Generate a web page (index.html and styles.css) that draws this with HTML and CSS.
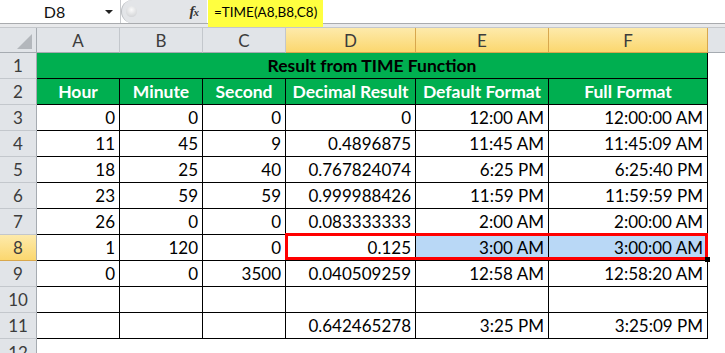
FILE: index.html
```html
<!DOCTYPE html>
<html>
<head>
<meta charset="utf-8">
<link rel="stylesheet" href="styles.css">
</head>
<body>
<div class="app">
  <div class="fbar">
    <div class="namebox"><span class="ref">D8</span><span class="caret"></span></div>
    <div class="fxzone"><span class="knob"></span><span class="fx">f<small>x</small></span></div>
    <div class="formula"><span class="fhl">=TIME(A8,B8,C8)</span></div>
  </div>
  <div class="sheet">
    <div class="corner"><span class="tri"></span></div>
    <div class="ch">A</div><div class="ch">B</div><div class="ch">C</div>
    <div class="ch sel">D</div><div class="ch sel">E</div><div class="ch sel">F</div><div class="ch fill"></div>

    <div class="rh">1</div>
    <div class="c title">Result from TIME Function</div><div class="x"></div>

    <div class="rh">2</div>
    <div class="c hd">Hour</div><div class="c hd">Minute</div><div class="c hd">Second</div><div class="c hd">Decimal Result</div><div class="c hd">Default Format</div><div class="c hd">Full Format</div><div class="x"></div>

    <div class="rh">3</div>
    <div class="c">0</div><div class="c">0</div><div class="c">0</div><div class="c">0</div><div class="c">12:00 AM</div><div class="c">12:00:00 AM</div><div class="x"></div>

    <div class="rh">4</div>
    <div class="c">11</div><div class="c">45</div><div class="c">9</div><div class="c">0.4896875</div><div class="c">11:45 AM</div><div class="c">11:45:09 AM</div><div class="x"></div>

    <div class="rh">5</div>
    <div class="c">18</div><div class="c">25</div><div class="c">40</div><div class="c">0.767824074</div><div class="c">6:25 PM</div><div class="c">6:25:40 PM</div><div class="x"></div>

    <div class="rh">6</div>
    <div class="c">23</div><div class="c">59</div><div class="c">59</div><div class="c">0.999988426</div><div class="c">11:59 PM</div><div class="c">11:59:59 PM</div><div class="x"></div>

    <div class="rh">7</div>
    <div class="c">26</div><div class="c">0</div><div class="c">0</div><div class="c">0.083333333</div><div class="c">2:00 AM</div><div class="c">2:00:00 AM</div><div class="x"></div>

    <div class="rh sel">8</div>
    <div class="c">1</div><div class="c">120</div><div class="c">0</div><div class="c">0.125</div><div class="c hl">3:00 AM</div><div class="c hl">3:00:00 AM</div><div class="x"></div>

    <div class="rh">9</div>
    <div class="c">0</div><div class="c">0</div><div class="c">3500</div><div class="c">0.040509259</div><div class="c">12:58 AM</div><div class="c">12:58:20 AM</div><div class="x"></div>

    <div class="rh">10</div>
    <div class="c"></div><div class="c"></div><div class="c"></div><div class="c"></div><div class="c"></div><div class="c"></div><div class="x"></div>

    <div class="rh">11</div>
    <div class="c"></div><div class="c"></div><div class="c"></div><div class="c">0.642465278</div><div class="c">3:25 PM</div><div class="c">3:25:09 PM</div><div class="x"></div>

    <div class="rh last">12</div>
    <div class="x span6"></div><div class="x"></div>

    <div class="selbox"><span class="handle"></span></div>
  </div>
</div>
</body>
</html>
```
FILE: styles.css
```css
* { box-sizing: border-box; }
html, body { margin: 0; padding: 0; background: #fff; }
body { font-family: Lato, "Liberation Sans", sans-serif; }
.app { width: 725px; height: 353px; overflow: hidden; }

/* formula bar */
.fbar {
  height: 28px;
  display: flex;
  align-items: flex-start;
  background: linear-gradient(#fff 0, #fff 23px, #a9abae 23px, #a9abae 24px, #e8e9eb 24px, #e8e9eb 27px, #c4c7cb 27px);
}
.namebox {
  width: 121px; height: 23px;
  display: flex; align-items: center;
  background: #fff;
  border-right: 1px solid #c8cacd;
}
.ref { flex: 1; text-align: center; font-size: 16px; color: #111; padding-left: 4px; }
.caret {
  width: 0; height: 0; margin-right: 7px;
  border-left: 4px solid transparent; border-right: 4px solid transparent;
  border-top: 4px solid #222;
}
.fxzone {
  width: 86px; height: 23px;
  display: flex; align-items: center; justify-content: space-between;
  background: #e3e5e8;
  border-radius: 12px 0 0 12px;
  border-left: 1px solid #b9bcc0;
  padding: 0 9px 0 4px;
}
.knob {
  width: 11px; height: 11px; border-radius: 50%;
  background: radial-gradient(circle at 50% 35%, #fafafa, #c9cbce);
}
.fx {
  font-family: "Liberation Serif", serif; font-style: italic; font-weight: bold;
  font-size: 15px; color: #333; letter-spacing: -1px;
}
.fx small { font-size: 11px; }
.formula { flex: 1; height: 23px; background: #fff; padding-left: 1px; }
.fhl {
  display: inline-flex; align-items: center;
  height: 27px; padding: 0 6px 4px 6px;
  background: #ffff40;
  font-size: 13.5px; color: #000;
}

/* sheet grid */
.sheet {
  position: relative;
  display: grid;
  grid-template-columns: 37px 83px 83px 83px 130px 133px 159px 1fr;
  grid-template-rows: 25px repeat(12, 26px);
  font-size: 17px;
}
.corner {
  position: relative;
  background: #e1e4e8;
  border-right: 1px solid #a6abb1;
  border-bottom: 1px solid #a6abb1;
}
.tri {
  position: absolute; right: 4px; bottom: 3px;
  width: 0; height: 0;
  border-left: 15px solid transparent;
  border-bottom: 15px solid #b3b7bc;
}
.ch {
  display: flex; align-items: center; justify-content: center;
  background: #e1e4e8;
  border-right: 1px solid #c3c7cc;
  border-bottom: 1px solid #a6abb1;
  color: #3c3c3c; font-size: 17px;
  padding-top: 1px;
}
.ch.sel {
  background: linear-gradient(#fdeaab, #fbd76f);
  border-right: 1px solid #d8a74d;
  border-bottom: 1px solid #d8a74d;
}
.ch.fill { border-right: none; }
.rh {
  display: flex; align-items: center; justify-content: center;
  background: #e1e4e8;
  border-right: 1px solid #a6abb1;
  border-bottom: 1px solid #c3c7cc;
  color: #3c3c3c; font-size: 17px;
}
.rh.sel {
  background: linear-gradient(#fdeaab, #fbd76f);
  border-bottom: 1px solid #d8a74d;
}
.rh.last { align-items: flex-start; padding-top: 3px; }
.c {
  display: flex; align-items: flex-end; justify-content: flex-end;
  padding: 0 4px 2px 0;
  border-right: 1px solid #000;
  border-bottom: 1px solid #000;
  color: #000;
  white-space: nowrap;
}
.c.hd, .c.title { justify-content: center; font-weight: bold; padding-right: 0; font-size: 17.5px; }
.c.hd { background: #00af50; color: #fff; }
.c.title { grid-column: span 6; background: #00af50; color: #000; }
.c.hl { background: #b9d8f6; }
.x { background: #fff; }
.x.span6 { grid-column: span 6; }

.selbox {
  position: absolute;
  left: 285px; top: 205px;
  width: 423px; height: 27px;
  border: 3px solid #f00;
}
.handle {
  position: absolute; right: -5px; bottom: -5px;
  width: 5px; height: 5px; background: #000;
}
```
